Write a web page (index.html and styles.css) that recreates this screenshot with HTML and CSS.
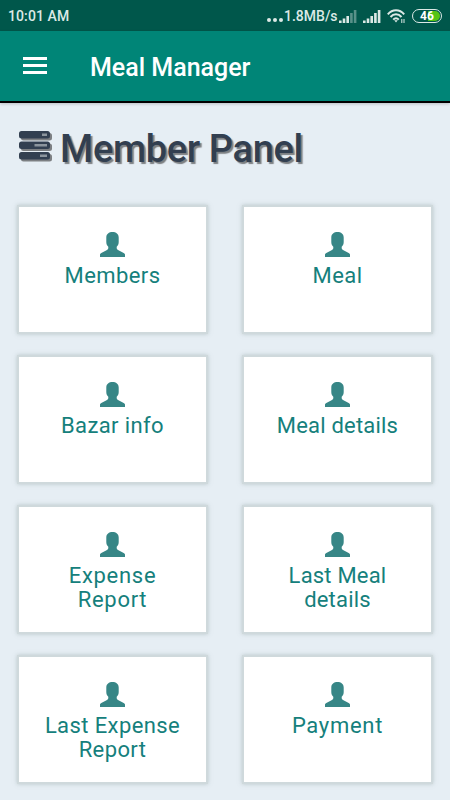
FILE: index.html
```html
<!DOCTYPE html>
<html lang="en">
<head>
<meta charset="utf-8">
<meta name="viewport" content="width=device-width, initial-scale=1">
<title>Meal Manager</title>
<link rel="stylesheet" href="styles.css">
</head>
<body>
<svg width="0" height="0" class="defs" aria-hidden="true">
  <symbol id="person" viewBox="0 0 25 25">
    <path d="M12.500 0C9 0 6.300 1.900 6.300 5.500V10c0 2 .7 3.600 2 4.700V16c0 .9-.4 1.400-1.300 1.900L1.300 21C.4 21.500 0 22 0 22.800V25H25V22.800c0-.8-.4-1.300-1.300-1.800L18 17.900c-.9-.5-1.300-1-1.300-1.900V14.700c1.300-1.100 2-2.700 2-4.700V5.500C18.700 1.900 16 0 12.500 0Z"/>
  </symbol>
</svg>
<div class="status">
  <span class="time">10:01 AM</span>
  <span class="dots"><i></i><i></i><i></i></span>
  <span class="speed">1.8MB/s</span>
  <svg class="signal" width="18" height="13" viewBox="0 0 18 13" fill="#dce9e6">
    <path d="M0 10.500h2.600V13H0zM3.700 8.500h2.600V13H3.700zM7.400 6h2.600v7H7.400z"/>
    <path d="M11.100 3h2.600v10h-2.600zM14.800 0h2.600v13h-2.600z" opacity=".4"/>
  </svg>
  <svg class="signal2" width="18" height="13" viewBox="0 0 18 13" fill="#dce9e6">
    <path d="M0 10.500h2.600V13H0zM3.700 8.500h2.600V13H3.700zM7.400 6h2.600v7H7.400zM11.100 3h2.600v10h-2.600zM14.800 0h2.600v13h-2.600z"/>
  </svg>
  <svg class="wifi" width="19" height="15" viewBox="0 0 19 15" fill="none" stroke="#dce9e6" stroke-width="2">
    <path d="M.8 5.300C5.500-.2 12.500-.2 17.200 5.300M3.500 8c3.200-3.800 7.800-3.800 11 0M6.200 10.600c1.800-1.900 3.800-1.900 5.600 0"/>
    <path d="M7.200 11.200L9 13.400l1.800-2.200Z" fill="#dce9e6" stroke="none"/>
    <path d="M14.800 10v4M17 10v4" stroke-width="1"/>
  </svg>
  <span class="battery"><span class="level">46</span></span>
</div>
<header class="appbar">
  <span class="menu"><i></i><i></i><i></i></span>
  <span class="name">Meal Manager</span>
</header>
<main>
  <h1>
    <svg class="server" width="31" height="28" viewBox="0 0 31 28">
      <g fill="#323f50"><rect width="31" height="7.500" rx="2.500"/><rect y="10.500" width="31" height="7.500" rx="2.500"/><rect y="21" width="31" height="7.500" rx="2.500"/></g>
      <g fill="#8c959d"><rect x="23" y="2.500" width="5" height="2.500"/><rect x="15.500" y="13" width="12.500" height="2.500"/><rect x="21" y="23.500" width="7" height="2.500"/></g>
    </svg>
    <span>Member Panel</span>
  </h1>
  <div class="grid">
    <div class="card"><svg><use href="#person"/></svg><p>Members</p></div>
    <div class="card"><svg><use href="#person"/></svg><p>Meal</p></div>
    <div class="card"><svg><use href="#person"/></svg><p>Bazar info</p></div>
    <div class="card"><svg><use href="#person"/></svg><p class="tight">Meal details</p></div>
    <div class="card"><svg><use href="#person"/></svg><p class="wide">Expense<br>Report</p></div>
    <div class="card"><svg><use href="#person"/></svg><p class="tight">Last Meal<br>details</p></div>
    <div class="card"><svg><use href="#person"/></svg><p>Last Expense<br>Report</p></div>
    <div class="card"><svg><use href="#person"/></svg><p class="wide">Payment</p></div>
  </div>
</main>
</body>
</html>
```
FILE: styles.css
```css
* { box-sizing: border-box; }
body {
  margin: 0;
  height: 800px;
  overflow: hidden;
  background: #e6eef4;
  font-family: Roboto, "Liberation Sans", sans-serif;
}
.defs { display: none; }
.status {
  display: flex;
  align-items: center;
  height: 31px;
  padding: 1px 8px 0;
  background: #00574b;
  color: #dce9e6;
  font-size: 14px;
  font-weight: 500;
}
.time { margin-right: auto; letter-spacing: .1px; }
.dots { display: flex; gap: 2px; margin: 7px 1px 0 0; }
.dots i { width: 4px; height: 4px; border-radius: 50%; background: #dce9e6; }
.speed { width: 53px; white-space: nowrap; }
.signal { margin-left: 2px; }
.signal2 { margin-left: 6px; }
.wifi { margin-left: 6px; }
.battery {
  width: 30px;
  height: 14px;
  margin-left: 6px;
  padding: 1px;
  border: 1.500px solid #dce9e6;
  border-radius: 7px;
}
.level {
  display: block;
  height: 100%;
  border-radius: 5px;
  background: linear-gradient(90deg, #00574b 54%, #55c413 54%);
  color: #fff;
  font-size: 12px;
  font-weight: 700;
  line-height: 10px;
  text-align: center;
}
.appbar {
  display: flex;
  align-items: center;
  height: 72px;
  padding-left: 23px;
  background: #008577;
  border-bottom: 2px solid #000;
  box-shadow: 0 1px 3px rgba(0, 0, 0, .2);
}
.menu { display: flex; flex-direction: column; gap: 4px; width: 24px; margin-top: -2px; }
.menu i { height: 3px; background: #fff; }
.name { margin: 3px 0 0 43px; color: #fff; font-size: 25px; font-weight: 500; }
main { padding: 0 17px; }
h1 {
  display: flex;
  height: 102px;
  margin: 0;
  padding: 23px 0 0 2px;
  color: #323f50;
  font-size: 38px;
  font-weight: 500;
  line-height: 46px;
  letter-spacing: -.35px;
  text-shadow: 2px 2px 1px #7c7f82;
  white-space: nowrap;
}
h1 span { margin-left: 10px; }
.server { margin-top: 5px; overflow: visible; filter: drop-shadow(2px 2px .5px #7c7f82); }
.grid {
  display: grid;
  grid-template-columns: 191px 191px;
  grid-auto-rows: 129px;
  gap: 21px 34px;
}
.card {
  padding-top: 25px;
  border: 2px solid #cfd9dc;
  background: #fff;
  box-shadow: 0 0 4px rgba(140, 160, 160, .5);
  color: #15807c;
  text-align: center;
}
.card svg { display: block; width: 25px; height: 25px; margin: 0 auto; fill: #378686; }
.card p { margin: 7px 0 0; font-size: 22px; line-height: 24px; letter-spacing: .4px; }
.card .tight { letter-spacing: .2px; }
.card .wide { letter-spacing: .7px; }
```
